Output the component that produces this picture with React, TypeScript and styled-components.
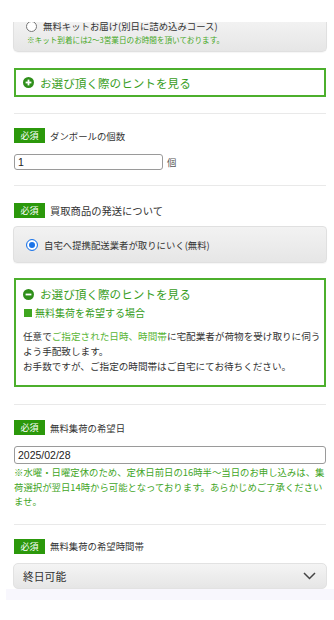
import { FunctionComponent } from "react";
import styled, { createGlobalStyle } from "styled-components";

const GlobalStyle = createGlobalStyle`
    html, body {
        margin: 0;
        padding: 0;
        background: #ffffff;
    }
    body {
        font-family: "Noto Sans CJK JP", "Noto Sans", sans-serif;
        color: #333333;
    }
`;

const Page = styled.div`
    width: 328px;
    margin-left: 6px;
`;

const Content = styled.div`
    display: flex;
    flex-direction: column;
    padding: 22px 8px 0 8px;
`;

const ChoiceCard = styled.div<{ $clipped?: boolean }>`
    display: flex;
    flex-direction: column;
    margin: 0 -1px;
    overflow: hidden;
    background: linear-gradient(#f2f2f2, #e6e6e6);
    border: 1px solid #e0e0e0;
    border-top: ${({ $clipped }) => ($clipped ? "none" : "1px solid #e0e0e0")};
    border-radius: ${({ $clipped }) => ($clipped ? "0 0 5px 5px" : "4px")};
    box-shadow: 0 1px 1px rgba(0, 0, 0, 0.04);
    padding: ${({ $clipped }) => ($clipped ? "0 12px 6px 12px" : "0 12px")};
    height: ${({ $clipped }) => ($clipped ? "auto" : "35px")};
    justify-content: center;
`;

const RadioRow = styled.label<{ $clipped?: boolean }>`
    display: flex;
    align-items: center;
    gap: 6px;
    margin-top: ${({ $clipped }) => ($clipped ? "-3px" : "0")};
    height: 14px;
    font-size: 9.4px;
    color: #333333;
`;

const Radio = styled.span<{ $checked?: boolean }>`
    flex: none;
    width: ${({ $checked }) => ($checked ? "10px" : "9px")};
    height: ${({ $checked }) => ($checked ? "10px" : "9px")};
    border-radius: 50%;
    background: #ffffff;
    border: ${({ $checked }) => ($checked ? "1px solid #1a73e8" : "1px solid #767676")};
    box-shadow: ${({ $checked }) => ($checked ? "inset 0 0 0 2px #ffffff, inset 0 0 0 6px #1a73e8" : "none")};
`;

const KitNote = styled.div`
    margin-top: 2px;
    padding-left: 1px;
    font-size: 7.6px;
    line-height: 10px;
    color: #45a824;
`;

const HintBox = styled.div<{ $open?: boolean }>`
    display: flex;
    flex-direction: column;
    border: 2px solid #4caf2c;
    padding: ${({ $open }) => ($open ? "6px 1px 11px 7px" : "0 7px")};
    height: ${({ $open }) => ($open ? "auto" : "25px")};
    justify-content: ${({ $open }) => ($open ? "flex-start" : "center")};
    margin-top: ${({ $open }) => ($open ? "15px" : "16px")};
`;

const HintTitle = styled.div`
    display: flex;
    align-items: center;
    gap: 6px;
    font-size: 11.6px;
    line-height: 16px;
    color: #389d1c;
`;

const HintSub = styled.div`
    display: flex;
    align-items: center;
    gap: 3px;
    margin-top: 4px;
    font-size: 10px;
    line-height: 14px;
    color: #389d1c;

    &::before {
        content: "";
        width: 8px;
        height: 8px;
        margin-left: 1px;
        background: #3fa61f;
    }
`;

const HintBody = styled.p`
    margin: 9px 0 0 0;
    font-size: 9.6px;
    line-height: 15px;
    color: #333333;

    em {
        font-style: normal;
        color: #5ab536;
    }
`;

const Divider = styled.hr<{ $top: number }>`
    border: none;
    height: 1px;
    background: #e9e9e9;
    margin: ${({ $top }) => $top}px 0 0 0;
`;

const FieldHead = styled.div<{ $top: number }>`
    display: flex;
    align-items: center;
    gap: 5px;
    margin-top: ${({ $top }) => $top}px;
`;

const Badge = styled.span`
    display: flex;
    align-items: center;
    justify-content: center;
    width: 31px;
    height: 15px;
    background: #2b980b;
    color: #ffffff;
    font-size: 9px;
`;

const FieldLabel = styled.span<{ $large?: boolean }>`
    font-size: ${({ $large }) => ($large ? "10.3px" : "9.4px")};
    color: #333333;
`;

const InputRow = styled.div<{ $top: number }>`
    display: flex;
    align-items: center;
    gap: 4px;
    margin-top: ${({ $top }) => $top}px;
    font-size: 9.4px;
    color: #555555;
`;

const TextBox = styled.div<{ $wide?: boolean }>`
    display: flex;
    align-items: center;
    box-sizing: border-box;
    width: ${({ $wide }) => ($wide ? "312px" : "149px")};
    height: ${({ $wide }) => ($wide ? "18px" : "16px")};
    padding: 0 3px;
    border: 1px solid #9a9a9a;
    border-radius: 3px;
    background: #ffffff;
    font-family: "Liberation Sans", Arial, sans-serif;
    font-size: 10.5px;
    color: #222222;
`;

const DateNote = styled.p`
    margin: 1px 0 0 0;
    font-size: 9.4px;
    line-height: 14.5px;
    color: #3fa51f;
`;

const SelectBox = styled.div`
    display: flex;
    align-items: center;
    justify-content: space-between;
    box-sizing: border-box;
    height: 26px;
    margin: 9px -1px 0 -1px;
    padding: 0 10px 0 9px;
    border: 1px solid #e2e2e2;
    border-radius: 5px;
    background: linear-gradient(#f4f4f4, #e6e6e6);
    font-size: 10.8px;
    color: #333333;
`;

const Band = styled.div`
    height: 11px;
    background: #f8f7fd;
`;

const CircleIcon: FunctionComponent<{ minus?: boolean }> = ({ minus }) => (
    <svg width="11" height="11" viewBox="0 0 11 11">
        <circle cx="5.5" cy="5.5" r="5.5" fill="#2f8f1a" />
        <line x1="2.6" y1="5.5" x2="8.4" y2="5.5" stroke="#fff" strokeWidth="1.8" />
        {!minus && <line x1="5.5" y1="2.6" x2="5.5" y2="8.4" stroke="#fff" strokeWidth="1.8" />}
    </svg>
);

const Chevron = () => (
    <svg width="13" height="8" viewBox="0 0 13 8">
        <polyline points="1,1 6.5,6.5 12,1" fill="none" stroke="#444" strokeWidth="1.5" />
    </svg>
);

const App = () => {
    return (
        <Page>
            <GlobalStyle />
            <Content>
                <ChoiceCard $clipped>
                    <RadioRow $clipped>
                        <Radio />
                        無料キットお届け(別日に詰め込みコース)
                    </RadioRow>
                    <KitNote>※キット到着には2〜3営業日のお時間を頂いております。</KitNote>
                </ChoiceCard>

                <HintBox>
                    <HintTitle>
                        <CircleIcon />
                        お選び頂く際のヒントを見る
                    </HintTitle>
                </HintBox>

                <Divider $top={16} />
                <FieldHead $top={14}>
                    <Badge>必須</Badge>
                    <FieldLabel>ダンボールの個数</FieldLabel>
                </FieldHead>
                <InputRow $top={11}>
                    <TextBox>1</TextBox>
                    個
                </InputRow>

                <Divider $top={15} />
                <FieldHead $top={17}>
                    <Badge>必須</Badge>
                    <FieldLabel $large>買取商品の発送について</FieldLabel>
                </FieldHead>
                <ChoiceCard style={{ marginTop: 8 }}>
                    <RadioRow>
                        <Radio $checked />
                        自宅へ提携配送業者が取りにいく(無料)
                    </RadioRow>
                </ChoiceCard>

                <HintBox $open>
                    <HintTitle>
                        <CircleIcon minus />
                        お選び頂く際のヒントを見る
                    </HintTitle>
                    <HintSub>無料集荷を希望する場合</HintSub>
                    <HintBody>
                        任意で<em>ご指定された日時、時間帯</em>に宅配業者が荷物を受け取りに伺うよう手配致します。
                        <br />
                        お手数ですが、ご指定の時間帯はご自宅にてお待ちください。
                    </HintBody>
                </HintBox>

                <Divider $top={17} />
                <FieldHead $top={15}>
                    <Badge>必須</Badge>
                    <FieldLabel>無料集荷の希望日</FieldLabel>
                </FieldHead>
                <InputRow $top={11}>
                    <TextBox $wide>2025/02/28</TextBox>
                </InputRow>
                <DateNote>
                    ※水曜・日曜定休のため、定休日前日の16時半〜当日のお申し込みは、集荷選択が翌日14時から可能となっております。あらかじめご了承くださいませ。
                </DateNote>

                <Divider $top={15} />
                <FieldHead $top={14}>
                    <Badge>必須</Badge>
                    <FieldLabel>無料集荷の希望時間帯</FieldLabel>
                </FieldHead>
                <SelectBox>
                    終日可能
                    <Chevron />
                </SelectBox>
            </Content>
            <Band />
        </Page>
    );
};

export default App;
